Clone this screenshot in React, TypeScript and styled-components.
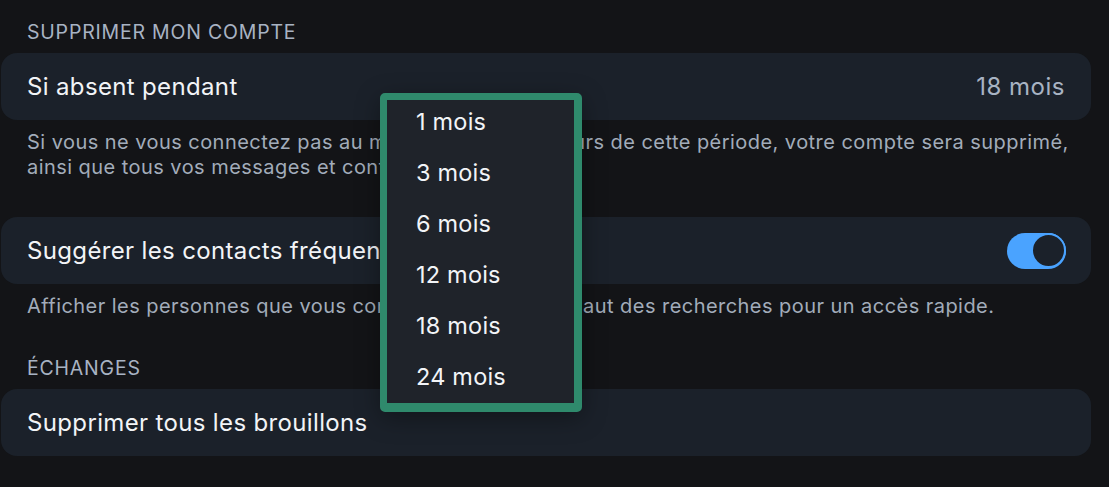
import React, { useState } from "react";
import styled, { createGlobalStyle } from "styled-components";

const GlobalStyle = createGlobalStyle`
  html, body {
    margin: 0;
    padding: 0;
    background: #131417;
    font-family: Inter, "Noto Sans", "Liberation Sans", sans-serif;
    -webkit-font-smoothing: antialiased;
  }
`;

const Page = styled.div`
  position: relative;
  width: 1109px;
  height: 487px;
  overflow: hidden;
  background: #131417;
  padding: 21px 18px 0 1px;
  box-sizing: border-box;
`;

const Section = styled.section<{ $gap?: number }>`
  display: flex;
  flex-direction: column;
  margin-bottom: ${(p) => p.$gap ?? 0}px;
`;

const SectionTitle = styled.h2`
  margin: 0 0 10px 0;
  padding-left: 26px;
  font-size: 19.5px;
  line-height: 22px;
  font-weight: 400;
  letter-spacing: 0.8px;
  color: #a8b3c3;
`;

const Card = styled.div`
  display: flex;
  align-items: center;
  justify-content: space-between;
  height: 67px;
  padding: 0 25px 0 26px;
  border-radius: 16px;
  background: #1b212a;
  box-sizing: border-box;
`;

const RowLabel = styled.span`
  font-size: 24px;
  color: #f2f4f7;
  letter-spacing: 0.35px;
`;

const RowValue = styled.span`
  font-size: 24px;
  color: #a8b3c3;
  letter-spacing: 0.5px;
  padding-right: 1px;
`;

const Description = styled.p`
  margin: 0;
  padding: 10px 14px 0 26px;
  font-size: 20px;
  line-height: 25px;
  color: #a2acba;
  letter-spacing: 0.45px;
`;

const Toggle = styled.button<{ $on: boolean }>`
  width: 59px;
  height: 36px;
  border: none;
  padding: 0;
  border-radius: 18px;
  background: ${(p) => (p.$on ? "#4aa3ff" : "#3a414c")};
  cursor: pointer;
  display: flex;
  align-items: center;
  justify-content: ${(p) => (p.$on ? "flex-end" : "flex-start")};
`;

const Knob = styled.span`
  width: 35px;
  height: 35px;
  border-radius: 50%;
  box-sizing: border-box;
  background: #1b212a;
  border: 2px solid #4aa3ff;
`;

const Dropdown = styled.div`
  position: absolute;
  left: 380px;
  top: 93px;
  width: 202px;
  height: 319px;
  box-sizing: border-box;
  border: 7px solid #2f8a6c;
  border-bottom-width: 9px;
  border-right-width: 8px;
  border-radius: 5px;
  background: #1f232a;
  overflow: hidden;
  box-shadow: 0 6px 24px rgba(0, 0, 0, 0.35);
`;

const OptionList = styled.ul`
  list-style: none;
  margin: -4px 0 0 0;
  padding: 0;
`;

const Option = styled.li`
  height: 51px;
  display: flex;
  align-items: center;
  padding-left: 29px;
  font-size: 23.5px;
  color: #f2f4f7;
  letter-spacing: 0.2px;
`;

const options = ["1 mois", "3 mois", "6 mois", "12 mois", "18 mois", "24 mois"];

export default function App() {
  const [suggest, setSuggest] = useState(true);
  return (
    <>
      <GlobalStyle />
      <Page>
        <Section $gap={37}>
          <SectionTitle>SUPPRIMER MON COMPTE</SectionTitle>
          <Card>
            <RowLabel>Si absent pendant</RowLabel>
            <RowValue>18 mois</RowValue>
          </Card>
          <Description>
            Si vous ne vous connectez pas au moins une fois au cours de cette période, votre compte sera supprimé,
            ainsi que tous vos messages et contacts.
          </Description>
        </Section>
        <Section $gap={38}>
          <Card>
            <RowLabel>Suggérer les contacts fréquents</RowLabel>
            <Toggle $on={suggest} onClick={() => setSuggest(!suggest)} aria-label="toggle">
              <Knob />
            </Toggle>
          </Card>
          <Description>
            Afficher les personnes que vous contactez souvent en haut des recherches pour un accès rapide.
          </Description>
        </Section>
        <Section>
          <SectionTitle>ÉCHANGES</SectionTitle>
          <Card>
            <RowLabel>Supprimer tous les brouillons</RowLabel>
          </Card>
        </Section>
        <Dropdown>
          <OptionList>
            {options.map((o) => (
              <Option key={o}>{o}</Option>
            ))}
          </OptionList>
        </Dropdown>
      </Page>
    </>
  );
}
